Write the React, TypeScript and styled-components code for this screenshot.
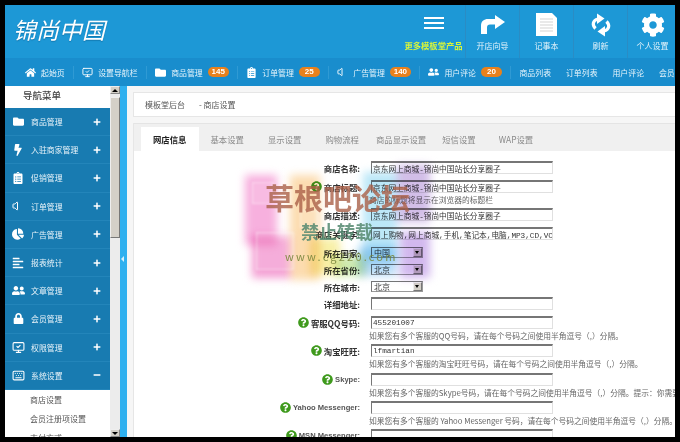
import React from "react";
import styled, { createGlobalStyle } from "styled-components";
import { FaHome, FaFolder, FaBolt, FaClipboardList, FaChartPie, FaUserFriends, FaLock, FaCog, FaQuestionCircle, FaAlignLeft, FaPlus, FaMinus } from "react-icons/fa";
import { MonitorCheck, Volume, Keyboard } from "lucide-react";

const FONT = `"Noto Sans CJK SC", "Liberation Sans", sans-serif`;

const Global = createGlobalStyle`
  html, body { margin: 0; padding: 0; background: #000; height: 442px; overflow: hidden; }
  * { box-sizing: border-box; }
  body { font-family: ${FONT}; }
`;

const Frame = styled.div`
  position: relative;
  margin: 5px 5px 0;
  width: 670px;
  height: 432px;
  overflow: hidden;
  background: #fff;
  display: flex;
  flex-direction: column;
`;

const Header = styled.header`
  height: 53px;
  flex: none;
  background: #1d98d6;
  display: flex;
  align-items: stretch;
  padding-left: 9px;
`;
const Logo = styled.div`
  font-size: 23px;
  font-weight: 400;
  font-style: italic;
  color: #fff;
  line-height: 49px;
  height: 53px;
  flex: 1;
  margin-left: -1px;
  text-shadow: 0 1px 1px rgba(0, 60, 100, 0.35);
`;
const More = styled.div`
  width: 61px;
  margin-right: 1px;
  display: flex;
  flex-direction: column;
  align-items: center;
  padding-top: 12px;
`;
const Burger = styled.div`
  width: 20px;
  height: 12px;
  border-top: 2px solid #fff;
  border-bottom: 2px solid #fff;
  position: relative;
  &::after { content: ""; position: absolute; left: 0; right: 0; top: 3px; height: 2px; background: #fff; }
`;
const MoreText = styled.div`
  margin-top: 10px;
  color: #d8f53c;
  font-size: 8.3px;
  font-weight: 700;
  white-space: nowrap;
  line-height: 12px;
`;
const Tool = styled.div`
  width: 54px;
  flex: none;
  border-left: 1px solid #2a8cc4;
  display: flex;
  flex-direction: column;
  align-items: center;
  color: #fff;
  &:last-child { width: 48px; padding-left: 2px; }
`;
const ToolIcon = styled.div`
  height: 36px;
  display: flex;
  align-items: center;
  justify-content: center;
  padding-top: 3px;
`;
const ToolText = styled.div`
  font-size: 8px;
  line-height: 12px;
  margin-top: -1.5px;
  color: #e3f2fa;
  white-space: nowrap;
`;

const Nav = styled.nav`
  height: 28px;
  flex: none;
  background: #198dcd;
  display: flex;
  align-items: center;
  padding-left: 20px;
  color: #e6f4fb;
  font-size: 7.9px;
  white-space: nowrap;
  overflow: hidden;
`;
const NavItem = styled.div`
  display: flex;
  align-items: center;
  flex: none;
  gap: 5px;
  padding-right: 8px;
  margin-right: 8.5px;
  height: 13px;
  border-right: 1px solid #2f9ad4;
`;
const NavPlain = styled.div`
  flex: none;
  width: 46.5px;
`;
const NavIconBox = styled.span`
  width: 11px;
  display: inline-flex;
  justify-content: center;
  color: #fff;
`;
const Badge = styled.span`
  width: 21px;
  height: 10px;
  line-height: 10px;
  border-radius: 5px;
  background: #e8811c;
  color: #fff;
  font-family: "Liberation Sans", sans-serif;
  font-weight: 700;
  font-size: 8px;
  text-align: center;
`;

const Body = styled.div`
  flex: 1;
  min-height: 0;
  display: flex;
`;
const Side = styled.aside`
  width: 105px;
  flex: none;
  background: #fff;
  overflow: hidden;
`;
const SideTitle = styled.div`
  height: 22px;
  font-size: 9.5px;
  font-weight: 500;
  color: #444;
  padding-left: 18px;
  line-height: 19px;
`;
const SideRow = styled.div`
  height: 28.2px;
  background: #187bb1;
  color: #e8f3f9;
  font-size: 7.9px;
  display: flex;
  align-items: center;
  border-bottom: 1px solid #2385ba;
`;
const SideIcon = styled.span`
  width: 26px;
  flex: none;
  display: inline-flex;
  justify-content: center;
  color: #fff;
`;
const SideLabel = styled.span`
  flex: 1;
  white-space: nowrap;
`;
const SideSign = styled.span`
  width: 17px;
  flex: none;
  color: #fff;
  display: inline-flex;
`;
const SubItem = styled.div`
  height: 19px;
  line-height: 19px;
  font-size: 8px;
  color: #555;
  padding-left: 25px;
  white-space: nowrap;
`;

const Scroll = styled.div`
  width: 10px;
  flex: none;
  background: #ececec;
  display: flex;
  flex-direction: column;
`;
const ScrollBtn = styled.div<{ $down?: boolean }>`
  height: 8px;
  flex: none;
  background: #d4d0c8;
  border: 1px solid #888;
  border-top-color: #eee;
  border-left-color: #eee;
  display: flex;
  align-items: center;
  justify-content: center;
  &::after {
    content: "";
    border-left: 3px solid transparent;
    border-right: 3px solid transparent;
    ${(p) => (p.$down ? "border-top: 3px solid #000;" : "border-bottom: 3px solid #000;")}
  }
`;
const Thumb = styled.div`
  height: 141px;
  flex: none;
  margin-top: 3px;
  background: #d4d0c8;
  border: 1px solid #777;
  border-top-color: #eee;
  border-left-color: #eee;
`;
const ScrollGap = styled.div`
  flex: 1;
`;

const Splitter = styled.div`
  width: 7px;
  flex: none;
  background: #2fb0ef;
  position: relative;
  &::after {
    content: "";
    position: absolute;
    left: 1px;
    top: 170px;
    border-top: 3px solid transparent;
    border-bottom: 3px solid transparent;
    border-right: 3px solid #d8f0fc;
  }
`;
const Main = styled.main`
  flex: 1;
  min-width: 0;
  background: #f6f6f6;
  padding: 6px 0 0 6px;
  overflow: hidden;
`;
const Crumb = styled.div`
  height: 25px;
  background: #fff;
  border: 1px solid #e6e6e6;
  border-right: none;
  display: flex;
  align-items: center;
  padding-left: 11px;
  font-size: 8px;
  color: #555;
  white-space: nowrap;
`;
const CrumbSep = styled.span`
  margin-left: 14px;
`;
const Panel = styled.section`
  margin-top: 6px;
  background: #fff;
  height: 330px;
  border-left: 1px solid #e6e6e6;
`;
const Tabs = styled.div`
  height: 28px;
  background: #f0f0f0;
  border-top: 1px solid #e4e4e4;
  padding: 3px 0 0 7px;
  display: flex;
  white-space: nowrap;
  font-size: 8.4px;
`;
const Tab = styled.div<{ $active?: boolean; $l?: number; $r?: number }>`
  padding: 0 ${(p) => p.$r ?? 12}px 0 ${(p) => p.$l ?? 12}px;
  line-height: 24px;
  color: ${(p) => (p.$active ? "#222" : "#8a8a8a")};
  background: ${(p) => (p.$active ? "#fff" : "transparent")};
  font-weight: ${(p) => (p.$active ? 700 : 400)};
`;
const Form = styled.div`
  padding-top: 10px;
  display: flex;
  flex-direction: column;
`;
const Row = styled.div<{ $h: number }>`
  height: ${(p) => p.$h}px;
  flex: none;
  display: grid;
  grid-template-columns: 226px 1fr;
  grid-template-rows: 13px auto;
  column-gap: 11px;
`;
const Label = styled.label<{ $latin?: boolean }>`
  display: flex;
  align-items: center;
  justify-content: flex-end;
  gap: 2px;
  font-family: ${(p) => (p.$latin ? `"Liberation Sans", sans-serif` : FONT)};
  font-size: ${(p) => (p.$latin ? 7.6 : 8.4)}px;
  font-weight: 700;
  color: ${(p) => (p.$latin ? "#555" : "#333")};
  white-space: nowrap;
`;
const HelpIcon = styled.span`
  display: inline-flex;
  color: #3f9a1d;
  background: #fff;
  border-radius: 50%;
`;
const Text = styled.input`
  width: 182px;
  height: 13px;
  padding: 0 0 0 1px;
  margin: 0;
  border: 1px solid #e0e0e0;
  border-top: 2px solid #767676;
  border-left: 1px solid #767676;
  background: #fff;
  color: #333;
  font-family: "Liberation Mono", "Noto Sans CJK SC", monospace;
  font-size: 7.7px;
  line-height: 10px;
  outline: none;
`;
const Sel = styled.div`
  width: 52px;
  height: 11px;
  align-self: center;
  border: 1px solid #9a9a9a;
  border-top-color: #767676;
  border-left-color: #767676;
  background: #fff;
  font-size: 8px;
  line-height: 9px;
  padding-left: 2px;
  color: #333;
  position: relative;
`;
const SelBtn = styled.span`
  position: absolute;
  right: 0;
  top: 0;
  bottom: 0;
  width: 9px;
  background: #d4d0c8;
  border: 1px solid #eee;
  border-right-color: #777;
  border-bottom-color: #777;
  &::after {
    content: "";
    position: absolute;
    left: 1px;
    top: 2px;
    border-left: 2.5px solid transparent;
    border-right: 2.5px solid transparent;
    border-top: 3px solid #000;
  }
`;
const Hint = styled.div`
  grid-column: 2;
  margin-left: -2px;
  margin-top: 1px;
  font-size: 7.75px;
  line-height: 12px;
  color: #666;
  white-space: nowrap;
`;

const Water = styled.div`
  position: absolute;
  inset: 0;
  pointer-events: none;
  overflow: hidden;
`;
const Blob = styled.div<{ $x: number; $y: number; $w: number; $h: number; $c: string }>`
  position: absolute;
  left: ${(p) => p.$x - 5}px;
  top: ${(p) => p.$y - 5}px;
  width: ${(p) => p.$w}px;
  height: ${(p) => p.$h}px;
  background: ${(p) => p.$c};
  filter: blur(4px);
  mix-blend-mode: multiply;
`;
const Square = styled.div<{ $x: number; $y: number; $s: number }>`
  position: absolute;
  left: ${(p) => p.$x - 5}px;
  top: ${(p) => p.$y - 5}px;
  width: ${(p) => p.$s}px;
  height: ${(p) => p.$s}px;
  border: 1px solid rgba(255, 255, 255, 0.45);
  background: rgba(255, 255, 255, 0.14);
  filter: blur(0.8px);
`;
const WaterText = styled.div<{ $x: number; $y: number; $size: number; $c: string; $ls?: number; $bold?: boolean }>`
  position: absolute;
  left: ${(p) => p.$x - 5}px;
  top: ${(p) => p.$y - 5}px;
  font-size: ${(p) => p.$size}px;
  line-height: 1;
  color: ${(p) => p.$c};
  letter-spacing: ${(p) => p.$ls ?? 0}px;
  white-space: nowrap;
  font-weight: ${(p) => (p.$bold ? 700 : 400)};
  filter: blur(0.4px);
`;

const ArrowIcon = () => (
  <svg width="24" height="19" viewBox="0 0 24 19">
    <path d="M0 19V11C0 6 3 4 7 4h7V0l10 7-10 7V9.500H9C7 9.500 6 10.500 6 12.500V19z" fill="#fff" />
  </svg>
);
const DocIcon = () => (
  <svg width="21" height="23" viewBox="0 0 21 23">
    <path d="M0 0h16l5 5v18H0z" fill="#fff" />
    <path d="M4 6h13M4 9h13M4 12h13M4 15h13M4 18h13" stroke="#e2e2e2" strokeWidth="1.3" />
  </svg>
);
const RefreshIcon = () => (
  <svg width="24" height="24" viewBox="0 0 24 24" fill="none">
    <path d="M6.500 15.500C3 12 3.500 7.500 9 6" stroke="#fff" strokeWidth="3.200" />
    <path d="M8 0.500 15.500 5.500 8 11z" fill="#fff" />
    <path d="M17.500 8.500C21 12 20.500 16.500 15 18" stroke="#fff" strokeWidth="3.200" />
    <path d="M16 13 8.500 18.500 16 23.500z" fill="#fff" />
  </svg>
);

const Help = () => (
  <HelpIcon>
    <FaQuestionCircle size={11} />
  </HelpIcon>
);

const tools = [
  { t: "开店向导", i: <ArrowIcon /> },
  { t: "记事本", i: <DocIcon /> },
  { t: "刷新", i: <RefreshIcon /> },
  { t: "个人设置", i: <FaCog size={24} /> },
];

const navs = [
  { t: "起始页", i: <FaHome size={11} /> },
  { t: "设置导航栏", i: <MonitorCheck size={11} /> },
  { t: "商品管理", i: <FaFolder size={11} />, b: "145" },
  { t: "订单管理", i: <FaClipboardList size={11} />, b: "25" },
  { t: "广告管理", i: <Volume size={12} />, b: "140" },
  { t: "用户评论", i: <FaUserFriends size={12} />, b: "20" },
];

const sides = [
  { t: "商品管理", i: <FaFolder size={11} /> },
  { t: "入驻商家管理", i: <FaBolt size={12} /> },
  { t: "促销管理", i: <FaClipboardList size={12} /> },
  { t: "订单管理", i: <Volume size={12} /> },
  { t: "广告管理", i: <FaChartPie size={12} /> },
  { t: "报表统计", i: <FaAlignLeft size={12} /> },
  { t: "文章管理", i: <FaUserFriends size={13} /> },
  { t: "会员管理", i: <FaLock size={11} /> },
  { t: "权限管理", i: <MonitorCheck size={13} /> },
  { t: "系统设置", i: <Keyboard size={13} />, open: true },
];

const blobs = [
  { x: 245, y: 175, w: 32, h: 70, c: "#f7b0de" },
  { x: 252, y: 236, w: 38, h: 42, c: "#f4a0d4" },
  { x: 290, y: 175, w: 30, h: 105, c: "#fcdcb0" },
  { x: 310, y: 238, w: 30, h: 37, c: "#f8f0a8" },
  { x: 335, y: 256, w: 30, h: 20, c: "#cfeab0" },
  { x: 363, y: 172, w: 34, h: 90, c: "#bce8f8" },
  { x: 358, y: 246, w: 38, h: 30, c: "#b8dcf8" },
  { x: 397, y: 165, w: 33, h: 57, c: "#d2bee8" },
  { x: 400, y: 232, w: 30, h: 46, c: "#d2b8ee" },
];

export default function App() {
  return (
    <>
      <Global />
      <Frame>
        <Header>
          <Logo>锦尚中国</Logo>
          <More>
            <Burger />
            <MoreText>更多模板堂产品</MoreText>
          </More>
          {tools.map((x) => (
            <Tool key={x.t}>
              <ToolIcon>{x.i}</ToolIcon>
              <ToolText>{x.t}</ToolText>
            </Tool>
          ))}
        </Header>
        <Nav>
          {navs.map((n) => (
            <NavItem key={n.t}>
              <NavIconBox>{n.i}</NavIconBox>
              <span>{n.t}</span>
              {n.b && <Badge>{n.b}</Badge>}
            </NavItem>
          ))}
          <NavPlain>商品列表</NavPlain>
          <NavPlain>订单列表</NavPlain>
          <NavPlain>用户评论</NavPlain>
          <NavPlain>会员列表</NavPlain>
        </Nav>
        <Body>
          <Side>
            <SideTitle>导航菜单</SideTitle>
            {sides.map((s) => (
              <SideRow key={s.t}>
                <SideIcon>{s.i}</SideIcon>
                <SideLabel>{s.t}</SideLabel>
                <SideSign>{s.open ? <FaMinus size={8} /> : <FaPlus size={8} />}</SideSign>
              </SideRow>
            ))}
            <SubItem>商店设置</SubItem>
            <SubItem>会员注册项设置</SubItem>
            <SubItem>支付方式</SubItem>
          </Side>
          <Scroll>
            <ScrollBtn />
            <Thumb />
            <ScrollGap />
            <ScrollBtn $down />
          </Scroll>
          <Splitter />
          <Main>
            <Crumb>
              模板堂后台
              <CrumbSep>- 商店设置</CrumbSep>
            </Crumb>
            <Panel>
              <Tabs>
                <Tab $active>网店信息</Tab>
                <Tab>基本设置</Tab>
                <Tab>显示设置</Tab>
                <Tab $r={8.5}>购物流程</Tab>
                <Tab $l={8.5} $r={8}>商品显示设置</Tab>
                <Tab $l={8}>短信设置</Tab>
                <Tab $l={11}>WAP设置</Tab>
              </Tabs>
              <Form>
                <Row $h={19}>
                  <Label>商店名称:</Label>
                  <Text readOnly defaultValue="京东网上商城-锦尚中国站长分享圈子" />
                </Row>
                <Row $h={28}>
                  <Label><Help />商店标题:</Label>
                  <Text readOnly defaultValue="京东网上商城-锦尚中国站长分享圈子" />
                  <Hint>商店的标题将显示在浏览器的标题栏</Hint>
                </Row>
                <Row $h={19}>
                  <Label>商店描述:</Label>
                  <Text readOnly defaultValue="京东网上商城-锦尚中国站长分享圈子" />
                </Row>
                <Row $h={19}>
                  <Label>商店关键字:</Label>
                  <Text readOnly defaultValue="网上购物,网上商城,手机,笔记本,电脑,MP3,CD,VCD,DV" />
                </Row>
                <Row $h={17}>
                  <Label>所在国家:</Label>
                  <Sel>中国<SelBtn /></Sel>
                </Row>
                <Row $h={17}>
                  <Label>所在省份:</Label>
                  <Sel>北京<SelBtn /></Sel>
                </Row>
                <Row $h={17}>
                  <Label>所在城市:</Label>
                  <Sel>北京<SelBtn /></Sel>
                </Row>
                <Row $h={19}>
                  <Label>详细地址:</Label>
                  <Text readOnly />
                </Row>
                <Row $h={28}>
                  <Label><Help />客服QQ号码:</Label>
                  <Text readOnly defaultValue="455201007" />
                  <Hint>如果您有多个客服的QQ号码，请在每个号码之间使用半角逗号（,）分隔。</Hint>
                </Row>
                <Row $h={29}>
                  <Label><Help />淘宝旺旺:</Label>
                  <Text readOnly defaultValue="lfmartian" />
                  <Hint>如果您有多个客服的淘宝旺旺号码，请在每个号码之间使用半角逗号（,）分隔。</Hint>
                </Row>
                <Row $h={28}>
                  <Label $latin><Help />Skype:</Label>
                  <Text readOnly />
                  <Hint>如果您有多个客服的Skype号码，请在每个号码之间使用半角逗号（,）分隔。提示：你需要</Hint>
                </Row>
                <Row $h={28}>
                  <Label $latin><Help />Yahoo Messenger:</Label>
                  <Text readOnly />
                  <Hint>如果您有多个客服的 Yahoo Messenger 号码，请在每个号码之间使用半角逗号（,）分隔。</Hint>
                </Row>
                <Row $h={20}>
                  <Label $latin><Help />MSN Messenger:</Label>
                  <Text readOnly />
                </Row>
              </Form>
            </Panel>
          </Main>
        </Body>
        <Water>
          {blobs.map((b) => (
            <Blob key={`${b.x}-${b.y}`} $x={b.x} $y={b.y} $w={b.w} $h={b.h} $c={b.c} />
          ))}
          <Square $x={252} $y={182} $s={22} />
          <Square $x={256} $y={232} $s={38} />
          <Square $x={300} $y={210} $s={18} />
          <WaterText $x={265} $y={183} $size={29} $bold $c="rgba(170,96,72,0.8)">草根吧论坛</WaterText>
          <WaterText $x={301} $y={222} $size={18} $bold $c="rgba(84,136,112,0.85)">禁止转载</WaterText>
          <WaterText $x={285} $y={251} $size={11} $c="rgba(120,134,60,0.9)" $ls={2.2}>www.cg220.com</WaterText>
        </Water>
      </Frame>
    </>
  );
}
